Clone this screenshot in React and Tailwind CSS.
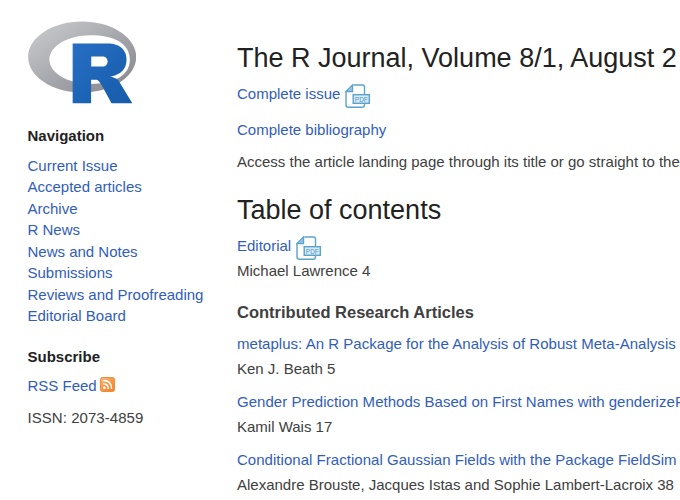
const navItems = [
  'Current Issue',
  'Accepted articles',
  'Archive',
  'R News',
  'News and Notes',
  'Submissions',
  'Reviews and Proofreading',
  'Editorial Board',
];

const articles = [
  ['metaplus: An R Package for the Analysis of Robust Meta-Analysis', 'Ken J. Beath 5'],
  ['Gender Prediction Methods Based on First Names with genderizeR', 'Kamil Wais 17'],
  ['Conditional Fractional Gaussian Fields with the Package FieldSim', 'Alexandre Brouste, Jacques Istas and Sophie Lambert-Lacroix 38'],
];

function Logo() {
  return (
    <svg className="block h-[82.5px] w-[108.5px]" viewBox="0 0 724 561" preserveAspectRatio="none" aria-label="R">
      <defs>
        <linearGradient id="ring" x1="0" y1="0" x2="1" y2="1">
          <stop offset="0" stopColor="#cbced0" />
          <stop offset="1" stopColor="#84838b" />
        </linearGradient>
        <linearGradient id="letter" x1="0" y1="0" x2="1" y2="1">
          <stop offset="0" stopColor="#276dc3" />
          <stop offset="1" stopColor="#165caa" />
        </linearGradient>
      </defs>
      <path fill="url(#ring)" fillRule="evenodd" d="M361.453,485.937C162.329,485.937 .906,377.828 .906,244.469C.906,111.109 162.329,3 361.453,3C560.578,3 722,111.109 722,244.469C722,377.828 560.578,485.937 361.453,485.937ZM416.641,97.406C265.289,97.406 142.594,171.314 142.594,262.484C142.594,353.654 265.289,427.562 416.641,427.562C567.992,427.562 679.687,377.033 679.687,262.484C679.687,147.971 567.992,97.406 416.641,97.406Z" />
      <path fill="url(#letter)" fillRule="evenodd" d="M550,377C550,377 571.822,383.585 584.5,390C588.899,392.226 596.51,396.668 602,402.5C607.378,408.212 610,414 610,414L696,559L557,559.062L492,437C492,437 478.69,414.131 470.5,407.5C463.668,401.969 460.755,400 454,400L420.974,400L421,558.974L298,559.026L298,152.938L545,152.938C545,152.938 657.5,154.967 657.5,262C657.5,369.033 550,377 550,377ZM496.5,241.024L422.037,240.976L422,310.026L496.5,310.002C496.5,310.002 531,309.895 531,274.877C531,239.155 496.5,241.024 496.5,241.024Z" />
    </svg>
  );
}

function PdfIcon() {
  return (
    <svg className="mt-px h-[25px] w-[26px] shrink-0" viewBox="0 0 26 25" fill="none" stroke="#5ba3cd" strokeWidth="1.4">
      <path d="M8.5 1H17.5Q19.5 1 19.5 3V10M1 7.5V21Q1 23.3 3.5 23.3H17Q19.5 23.3 19.5 21V20M1 7.5L7.5 1V7.5Z" />
      <path d="M2.5 7L7 2.5V7Z" fill="#8fc0dd" stroke="none" />
      <rect x="8.2" y="10.7" width="16.1" height="8.6" fill="#d7eaf5" />
      <text x="9.8" y="17.6" fill="#4d9bca" stroke="none" fontFamily="Liberation Sans, sans-serif" fontSize="7" textLength="13" lengthAdjust="spacingAndGlyphs">PDF</text>
    </svg>
  );
}

function RssIcon() {
  return (
    <svg className="-mt-[2px] h-[15px] w-[15px]" viewBox="0 0 15 15">
      <defs>
        <linearGradient id="rss" x1="0" y1="0" x2="1" y2="1">
          <stop offset="0" stopColor="#f7b57e" />
          <stop offset="1" stopColor="#f57f1c" />
        </linearGradient>
      </defs>
      <rect x=".5" y=".5" width="14" height="14" rx="2" fill="url(#rss)" stroke="#ef8b3b" />
      <circle cx="4.4" cy="10.8" r="1.3" fill="#fff" />
      <path d="M3.2 6.7Q8.4 6.7 8.4 12M3.2 3.5Q11.6 3.5 11.6 12" fill="none" stroke="#fff" strokeWidth="1.4" />
    </svg>
  );
}

export default function App() {
  return (
    <div className="flex h-[500px] w-[680px] overflow-hidden bg-white font-['Liberation_Sans',Arial,sans-serif] text-[15px] leading-[21.43px] text-[#404040]">
      <aside className="w-[237px] shrink-0 pl-[27.5px] pt-[21px]">
        <Logo />
        <h3 className="mt-[21.5px] font-bold text-[#222]">Navigation</h3>
        <nav className="mt-[8.5px] text-[#315dba]">
          {navItems.map((label) => <a key={label} className="block">{label}</a>)}
        </nav>
        <h3 className="mt-[19.5px] font-bold text-[#222]">Subscribe</h3>
        <div className="mt-[7.5px] flex items-center gap-[3px]"><a className="text-[#315dba]">RSS Feed</a><RssIcon /></div>
        <p className="mt-[11px] tracking-[0.05px]">ISSN: 2073-4859</p>
      </aside>
      <main className="whitespace-nowrap pt-[42px]">
        <h1 className="text-[27px] leading-[32px] text-[#222]">The R Journal, Volume 8/1, August 2</h1>
        <div className="mt-[9px] flex h-[25px] gap-[5px] text-[#315dba]"><a>Complete issue</a><PdfIcon /></div>
        <a className="mt-[11px] block text-[#315dba]">Complete bibliography</a>
        <p className="mt-[11px]">Access the article landing page through its title or go straight to the</p>
        <h2 className="mt-[21px] text-[27px] leading-[32px] text-[#222]">Table of contents</h2>
        <div className="mt-[9px] flex h-[25px] gap-[5px] text-[#315dba]"><a>Editorial</a><PdfIcon /></div>
        <p>Michael Lawrence 4</p>
        <h3 className="mt-[19px] text-[16.5px] font-bold leading-[24px]">Contributed Research Articles</h3>
        <div className="mt-[7px] flex flex-col gap-[8px]">
          {articles.map(([title, author]) => (
            <div key={title} className="h-[50px] leading-[25px]">
              <a className="block tracking-[0.03px] text-[#315dba]">{title}</a>
              <p>{author}</p>
            </div>
          ))}
        </div>
      </main>
    </div>
  );
}
